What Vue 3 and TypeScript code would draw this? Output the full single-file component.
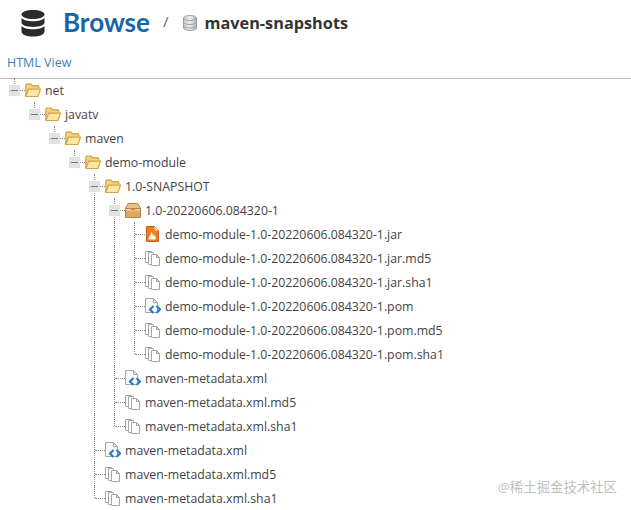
<script setup lang="ts">
type Kind = 'folder' | 'box' | 'jar' | 'copy' | 'xml'
interface Node { name: string; kind: Kind; children?: Node[] }
interface Row { name: string; kind: Kind; guides: boolean[]; expander: boolean; last: boolean }

const prefix = 'demo-module-1.0-20220606.084320-1'
const meta = (): Node[] => [
  { name: 'maven-metadata.xml', kind: 'xml' },
  { name: 'maven-metadata.xml.md5', kind: 'copy' },
  { name: 'maven-metadata.xml.sha1', kind: 'copy' },
]
const tree: Node[] = [
  { name: 'net', kind: 'folder', children: [
    { name: 'javatv', kind: 'folder', children: [
      { name: 'maven', kind: 'folder', children: [
        { name: 'demo-module', kind: 'folder', children: [
          { name: '1.0-SNAPSHOT', kind: 'folder', children: [
            { name: '1.0-20220606.084320-1', kind: 'box', children: [
              { name: `${prefix}.jar`, kind: 'jar' },
              { name: `${prefix}.jar.md5`, kind: 'copy' },
              { name: `${prefix}.jar.sha1`, kind: 'copy' },
              { name: `${prefix}.pom`, kind: 'xml' },
              { name: `${prefix}.pom.md5`, kind: 'copy' },
              { name: `${prefix}.pom.sha1`, kind: 'copy' },
            ] },
            ...meta(),
          ] },
          ...meta(),
        ] },
      ] },
    ] },
  ] },
]

function flatten(nodes: Node[], guides: boolean[]): Row[] {
  return nodes.flatMap((n, i) => {
    const last = i === nodes.length - 1
    const row: Row = { name: n.name, kind: n.kind, guides, expander: !!n.children, last }
    return [row, ...(n.children ? flatten(n.children, [...guides, !last]) : [])]
  })
}
const rows = flatten(tree, [])
</script>

<template>
  <div class="page">
    <header class="head">
      <svg class="db" viewBox="0 0 24 27" width="24" height="27">
        <path fill="#2b2b2b" d="M12 0c6.500 0 11.500 2 11.500 4.500S18.500 9 12 9 .5 7 .5 4.500 5.500 0 12 0z" />
        <path fill="#2b2b2b" d="M.5 8c1.800 2 6.200 3.300 11.500 3.300S21.700 10 23.500 8v4.500c0 2.500-5 4.400-11.500 4.400S.5 15 .5 12.500z" />
        <path fill="#2b2b2b" d="M.5 16c1.800 2 6.200 3.300 11.500 3.300S21.700 18 23.500 16v5.500C23.500 24.500 18.500 26.500 12 26.500S.5 24.500.5 21.500z" />
      </svg>
      <h1 class="title">Browse</h1>
      <span class="slash">/</span>
      <svg class="db-small" viewBox="0 0 14 16" width="14" height="16">
        <defs>
          <linearGradient id="dbg" x1="0" x2="1" y1="0" y2="0">
            <stop offset="0" stop-color="#c4c8cc" />
            <stop offset=".5" stop-color="#eceeef" />
            <stop offset="1" stop-color="#b0b4b8" />
          </linearGradient>
        </defs>
        <path fill="url(#dbg)" stroke="#9a9ea2" d="M.5 3C.5 1.500 3.500.5 7 .5s6.500 1 6.500 2.500v10c0 1.500-3 2.500-6.500 2.500S.5 14.500.5 13z" />
        <path fill="none" stroke="#9a9ea2" d="M.5 3c0 1.500 3 2.500 6.500 2.500S13.500 4.500 13.500 3M.5 7c0 1.500 3 2.500 6.500 2.500S13.500 8.500 13.500 7M.5 10.500c0 1.500 3 2.500 6.500 2.500s6.500-1 6.500-2.500" />
      </svg>
      <span class="repo">maven-snapshots</span>
    </header>
    <div class="toolbar"><a class="link">HTML View</a></div>
    <ul class="tree">
      <li v-for="(r, i) in rows" :key="i" class="row">
        <span v-for="(g, j) in r.guides" :key="j" class="cell" :class="{ guide: g }"></span>
        <span class="cell elbow" :class="{ end: r.last }">
          <span v-if="r.expander" class="exp"><span class="minus"></span></span>
        </span>
        <svg class="icon" viewBox="0 0 16 16" width="16" height="16">
          <template v-if="r.kind === 'folder'">
            <path fill="#f3d27f" stroke="#d0a044" stroke-width="1.200" d="M.8 14.500V3.200l1-1h4.500l1.200 1.600h5.800l.5.5V7" />
            <path fill="#fce7a6" stroke="#d6a548" stroke-width="1.200" d="M.8 14.500 3.500 7.200h12L13 14.500z" />
          </template>
          <template v-else-if="r.kind === 'box'">
            <path fill="#e8c08a" stroke="#b0834c" d="M.5 6.500 3 1.500h10l2.500 5z" />
            <path fill="#dfa862" stroke="#b0834c" d="M.5 6.500h15v9H.5z" />
            <path fill="#f2d2a4" d="M1 7h14v1.500H1z" />
            <path fill="#c08a4b" d="M6 6.500h4v1.500H6z" />
          </template>
          <template v-else-if="r.kind === 'jar'">
            <path fill="#ed7d23" stroke="#c8601a" d="M1.500.5h8l4 4v11h-12z" />
            <path fill="#fdf3e6" d="M3.500 13.500c-.3-2 1-3 2-4.500.5-1 .5-2 .5-3C7.500 7 8 8.500 8 10c.5-.5 1-1 1-1.500 1.500 1.500 2.200 3.300 1.700 5z" />
            <path fill="#fbd9b0" d="M9.500.5v4h4z" />
          </template>
          <template v-else-if="r.kind === 'copy'">
            <path fill="#fff" stroke="#a6a6a6" d="M.5 1.500h6v11h-6z" />
            <path fill="#fff" stroke="#a6a6a6" d="M3.500 2.500h5v12h-5z" />
            <path fill="#fff" stroke="#a6a6a6" d="M6.500 4.500h5l3 3v8h-8z" />
            <path fill="#e2e2e2" stroke="#a6a6a6" d="M11.500 4.500v3h3z" />
          </template>
          <template v-else>
            <path fill="#fafafa" stroke="#a6a6a6" d="M.5.5h8l4 4v10H.5z" />
            <path fill="#e2e2e2" stroke="#a6a6a6" d="M8.500.5v4h4z" />
            <path fill="none" stroke="#1f80c4" stroke-width="2.200" d="M8.500 8l-3.500 3.500 3.500 3.500M11.500 8l3.500 3.500-3.500 3.500" />
          </template>
        </svg>
        <span class="label">{{ r.name }}</span>
      </li>
    </ul>
    <div class="mark">@稀土掘金技术社区</div>
  </div>
</template>

<style>
html, body { margin: 0; background: #fff; }
</style>

<style scoped>
.page {
  position: relative;
  width: 631px;
  height: 510px;
  overflow: hidden;
  background: #fff;
  font-family: "Open Sans", "Noto Sans CJK SC", sans-serif;
  color: #444;
}
.head {
  display: flex;
  align-items: center;
  height: 46px;
  padding-left: 21px;
}
.db { flex: none; margin-right: 18px; }
.title {
  margin: -2px 0 0;
  font-family: "Lato", sans-serif;
  font-size: 26px;
  font-weight: 700;
  color: #1565a8;
}
.slash { margin: -4px 15px 0 13px; font-size: 15px; color: #666; }
.db-small { flex: none; margin-right: 7px; }
.repo { font-size: 16.3px; font-weight: 700; color: #333; }
.toolbar {
  height: 33px;
  padding: 8px 0 0 7px;
  box-sizing: border-box;
  border-bottom: 1px solid #bdbdbd;
  font-size: 12.5px;
  line-height: 17px;
}
.link { color: #3a7fbc; }
.tree { list-style: none; margin: -1px 0 0; padding: 0 0 0 5px; }
.row {
  display: flex;
  align-items: center;
  height: 24px;
  font-size: 12.3px;
}
.cell {
  position: relative;
  flex: none;
  width: 20px;
  height: 24px;
}
.guide::before,
.elbow::before {
  content: "";
  position: absolute;
  left: 9px;
  top: 0;
  bottom: 0;
  border-left: 1px dotted #8a8a8a;
}
.end::before { bottom: 12px; }
.elbow::after {
  content: "";
  position: absolute;
  left: 10px;
  right: 0;
  top: 12px;
  border-top: 1px dotted #8a8a8a;
}
.exp {
  position: absolute;
  z-index: 1;
  left: 4px;
  top: 7px;
  width: 11px;
  height: 11px;
  background: #e2e2e2;
  display: flex;
  align-items: center;
  justify-content: center;
}
.minus { width: 7px; height: 1px; background: #777; }
.icon { flex: none; }
.label { margin-left: 4px; white-space: nowrap; }
.mark {
  position: absolute;
  right: 14px;
  bottom: 14px;
  font-size: 13.400px;
  color: #bfbfbf;
  line-height: 18px;
}
</style>
